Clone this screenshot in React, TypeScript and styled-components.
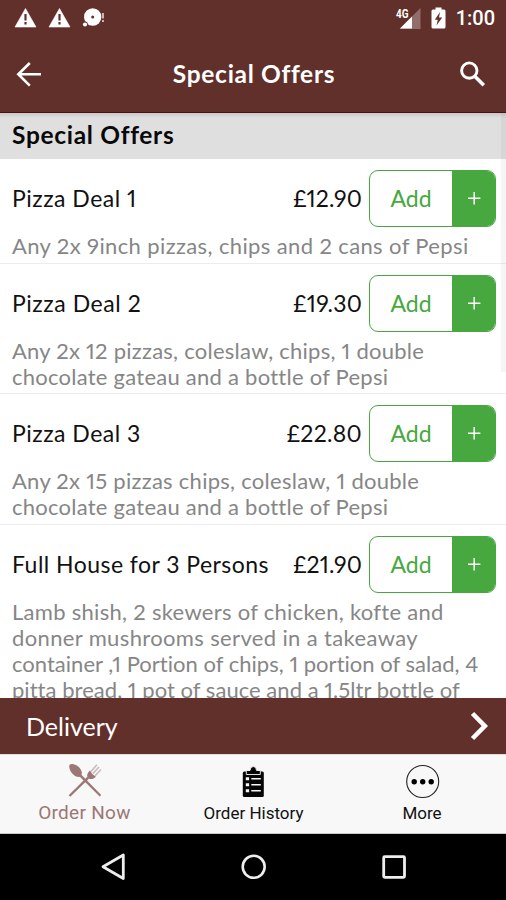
import React from "react";
import styled, { createGlobalStyle, css } from "styled-components";

const brand = "#62302b";
const green = "#46a83e";
const rosewood = "#9b7775";

const Global = createGlobalStyle`
  * { box-sizing: border-box; }
  body {
    margin: 0;
    font-family: "Lato", "Open Sans", sans-serif;
    font-variant-numeric: proportional-nums;
    font-variant-ligatures: none;
    background: #fff;
  }
`;

const Screen = styled.div`
  width: 506px;
  height: 900px;
  display: flex;
  flex-direction: column;
  overflow: hidden;
  background: #fff;
`;

const StatusBar = styled.div`
  flex: none;
  height: 36px;
  padding: 0 11px 0 13px;
  display: flex;
  justify-content: space-between;
  background: ${brand};
`;

const StatusGroup = styled.div<{ $gap: number }>`
  display: flex;
  gap: ${(p) => p.$gap}px;
`;

const Art = styled.svg`
  display: block;
  flex: none;
`;

const Clock = styled.span`
  font: 500 20px/37px "Roboto", sans-serif;
  color: #fff;
  margin-left: 2px;
`;

const Toolbar = styled.header`
  flex: none;
  height: 77px;
  padding: 0 19px 0 15px;
  display: grid;
  grid-template-columns: 28px 1fr 28px;
  align-items: center;
  background: ${brand};
  border-bottom: 1px solid #4d1210;
`;

const Title = styled.h1`
  margin: -1px 0 0 6px;
  text-align: center;
  font-size: 24.5px;
  font-weight: 700;
  letter-spacing: 0.7px;
  color: #fff;
`;

const List = styled.main`
  position: relative;
  flex: none;
  height: 585px;
  overflow: hidden;
`;

const ScrollThumb = styled.div`
  position: absolute;
  top: 0;
  right: 0;
  width: 5px;
  height: 259px;
  background: rgba(0, 0, 0, 0.04);
`;

const SectionTitle = styled.h2`
  margin: 0;
  height: 46px;
  padding: 0 12px;
  font-size: 24.5px;
  line-height: 44px;
  font-weight: 700;
  letter-spacing: 0.7px;
  background: linear-gradient(#c9c8ca, #dfdfdf 5px);
  color: #090909;
`;

const Item = styled.section<{ $height: number }>`
  height: ${(p) => p.$height}px;
  padding: 11px 10px 0 12px;
  border-bottom: 1px solid #ededed;
`;

const ItemRow = styled.div`
  display: flex;
  align-items: center;
  height: 57px;
`;

const textLine = css<{ $track: number }>`
  white-space: nowrap;
  letter-spacing: ${(p) => p.$track}px;
`;

const Name = styled.span<{ $track: number }>`
  ${textLine}
  flex: 1;
  font-size: 23px;
  line-height: 28px;
  padding-bottom: 2px;
  color: #111;
`;

const Price = styled.span<{ $track: number }>`
  ${textLine}
  font-size: 23px;
  line-height: 28px;
  padding-bottom: 2px;
  color: #111;
  margin-right: 7px;
`;

const AddButton = styled.button`
  display: flex;
  width: 127px;
  height: 57px;
  padding: 0;
  border: 1.5px solid ${green};
  border-radius: 9px;
  overflow: hidden;
  background: #fff;
  font: inherit;
`;

const AddLabel = styled.span`
  flex: 1;
  text-align: center;
  font-size: 23px;
  line-height: 54px;
  color: ${green};
`;

const AddPlus = styled.span`
  width: 43px;
  height: 100%;
  display: grid;
  place-items: center;
  background: ${green};
`;

const Description = styled.p`
  margin: 6px 0 0;
  font-size: 22px;
  line-height: 26px;
  color: #868686;
`;

const Line = styled.span<{ $track: number }>`
  ${textLine}
  display: block;
  width: max-content;
`;

const DeliveryBar = styled.div`
  flex: none;
  height: 56px;
  padding: 0 17px 0 26px;
  display: flex;
  align-items: center;
  justify-content: space-between;
  background: ${brand};
  color: #fff;
  font-size: 25px;
`;

const Tabs = styled.nav`
  flex: none;
  height: 80px;
  display: grid;
  grid-template-columns: 169px 169px 168px;
  background: #f8f8f8;
  border-top: 1px solid #e4dcdb;
  border-bottom: 1px solid #c8c8c8;
`;

const Tab = styled.div<{ $active?: boolean }>`
  display: flex;
  flex-direction: column;
  align-items: center;
  padding-top: 8px;
  font: 400 ${(p) => (p.$active ? 19 : 17)}px/24px "Roboto", sans-serif;
  color: ${(p) => (p.$active ? rosewood : "#111")};
`;

const TabLabel = styled.span<{ $track: number }>`
  ${textLine}
  margin-top: 2px;
`;

const SystemNav = styled.div`
  flex: 1;
  padding: 0 98px 0 99px;
  display: flex;
  align-items: center;
  justify-content: space-between;
  background: #000;
`;

const WarningIcon = () => (
  <Art width="24" height="36" viewBox="0 0 24 36">
    <path d="M12.5 8.500L23 27H2z" fill="#fff" stroke="#fff" strokeWidth="0.6" strokeLinejoin="round" />
    <path d="M12.5 14v6.500M12.500 22v2.400" stroke={brand} strokeWidth="2.2" />
  </Art>
);

const DebugIcon = () => (
  <Art width="26" height="36" viewBox="0 0 26 36">
    <circle cx="11.7" cy="17" r="8.7" fill="#fff" />
    <circle cx="11.7" cy="17" r="1.5" fill={brand} />
    <circle cx="4" cy="24.5" r="2.9" fill={brand} />
    <circle cx="4" cy="24.5" r="2.1" fill="#fff" />
    <path d="M22 13v5.500M22 20v2" stroke="#d3c2c0" strokeWidth="1.8" />
  </Art>
);

const SignalIcon = () => (
  <Art width="28" height="36" viewBox="0 0 28 36" fill="#fff">
    <path d="M26.5 8v21h-21z" opacity="0.3" />
    <path d="M18 16.500v12H6z" />
    <text x="2" y="17.5" fontFamily="Roboto, sans-serif" fontSize="12" fontWeight="700" textLength="12.500" lengthAdjust="spacingAndGlyphs">4G</text>
  </Art>
);

const BatteryIcon = () => (
  <Art width="16" height="36" viewBox="0 0 16 36">
    <path d="M5.500 7.500h6v2H14q1.500 0 1.500 1.500v16q0 1.500-1.500 1.500H3Q1.500 28.500 1.500 27V11q0-1.500 1.500-1.500h2.500z" fill="#fff" />
    <path d="M10 12L4.800 19.800h3L6.500 25.500l5.700-8H9z" fill={brand} />
  </Art>
);

const BackIcon = () => (
  <Art width="28" height="28" viewBox="0 0 28 28" fill="none" stroke="#fff" strokeWidth="2.6">
    <path d="M26 14.300H3.500M14.800 3L3.300 14.300l11.500 11.300" />
  </Art>
);

const SearchIcon = () => (
  <Art width="28" height="28" viewBox="0 0 28 28" fill="none" stroke="#fff">
    <circle cx="10.300" cy="10.600" r="7.700" strokeWidth="2.900" />
    <path d="M16 16.500l8.800 8.800" strokeWidth="3.600" />
  </Art>
);

const PlusIcon = () => (
  <Art width="14" height="14" viewBox="0 0 14 14" stroke="#fff" strokeWidth="1.500">
    <path d="M7.200 0v12.500M1 6.200h12.400" />
  </Art>
);

const ChevronIcon = () => (
  <Art width="20" height="30" viewBox="0 0 20 30" fill="none" stroke="#fff" strokeWidth="4.600">
    <path d="M3.500 2.500L15.800 15 3.500 27.500" />
  </Art>
);

const CutleryIcon = () => (
  <Art width="36" height="36" viewBox="0 0 36 36" fill={rosewood}>
    <path d="M2.200 3.500C2 1.500 4 .7 6.500 1.200c4 .8 7.300 4 8.200 7.500.3 1.300.1 2.300-.3 3.100L34.200 32l-1.500 1.600L12.800 13.800c-1.500.5-3.500.2-5.300-1.200C4.500 10.500 2.500 7.300 2.200 3.500z" />
    <path d="M1.700 32.200L20.300 13.700l1.800 1.800L3.300 33.800z" />
    <path d="M20.300 14c-.5-3 .6-4.500 2.600-6.500l2.500 3.800 3.500 2.400c-2.300 2.200-4.500 2.700-6.800 2z" />
    <path d="M23.700 8.800L30 1.800M25.800 10.600l6.200-6.600M28 12.800l6-6.300" stroke={rosewood} strokeWidth="1.700" opacity="0.450" />
  </Art>
);

const ClipboardIcon = () => (
  <Art width="36" height="36" viewBox="0.700 0 36 36">
    <path d="M9 8.500h18q1.500 0 1.500 1.500v22.500q0 1.500-1.500 1.500H9q-1.500 0-1.500-1.500V10Q7.500 8.500 9 8.500z" fill="#050505" />
    <path d="M11 11.500V7.500h3.700Q15 3.500 18 3.500t3.300 4H25v4z" fill="#050505" stroke="#f8f8f8" strokeWidth="0.900" />
    <g fill="#f8f8f8">
      <path d="M10.500 14.300h3.300v3h-3.300zM10.500 20.300h3.300v3h-3.300zM10.500 26.300h3.300v3h-3.300z" />
      <path d="M16 15h9.500v1.600H16zM16 21h9.500v1.600H16zM16 27h9.500v1.600H16z" />
    </g>
  </Art>
);

const MoreIcon = () => (
  <Art width="36" height="36" viewBox="-0.700 0 36 36">
    <circle cx="18" cy="18.500" r="16" fill="none" stroke="#222" strokeWidth="1.100" />
    <circle cx="9.500" cy="18.700" r="2.700" />
    <circle cx="18" cy="18.700" r="2.700" />
    <circle cx="26.500" cy="18.700" r="2.700" />
  </Art>
);

const NavBackIcon = () => (
  <Art width="28" height="28" viewBox="0 0 28 28" fill="none" stroke="#eee" strokeWidth="2.800" strokeLinejoin="round">
    <path d="M24.300 2v23.500L4 13.800z" />
  </Art>
);

const NavHomeIcon = () => (
  <Art width="28" height="28" viewBox="0 0 28 28" fill="none" stroke="#eee" strokeWidth="2.600">
    <circle cx="13.700" cy="13.800" r="11" />
  </Art>
);

const NavRecentsIcon = () => (
  <Art width="28" height="28" viewBox="0 0 28 28" fill="none" stroke="#eee" strokeWidth="2.800">
    <rect x="3.700" y="3.700" width="20.800" height="20.600" rx="1" />
  </Art>
);

interface Deal {
  name: string;
  nameTrack: number;
  price: string;
  priceTrack: number;
  height: number;
  lines: [string, number][];
}

const deals: Deal[] = [
  {
    name: "Pizza Deal 1",
    nameTrack: 0.5,
    price: "£12.90",
    priceTrack: 0.1,
    height: 105,
    lines: [["Any 2x 9inch pizzas, chips and 2 cans of Pepsi", 0.38]],
  },
  {
    name: "Pizza Deal 2",
    nameTrack: 0.55,
    price: "£19.30",
    priceTrack: 0.2,
    height: 130,
    lines: [
      ["Any 2x 12 pizzas, coleslaw, chips, 1 double", 0.25],
      ["chocolate gateau and a bottle of Pepsi", 0.25],
    ],
  },
  {
    name: "Pizza Deal 3",
    nameTrack: 0.5,
    price: "£22.80",
    priceTrack: 0.3,
    height: 131,
    lines: [
      ["Any 2x 15 pizzas chips, coleslaw, 1 double", 0.27],
      ["chocolate gateau and a bottle of Pepsi", 0.25],
    ],
  },
  {
    name: "Full House for 3 Persons",
    nameTrack: 0.46,
    price: "£21.90",
    priceTrack: 0.1,
    height: 210,
    lines: [
      ["Lamb shish, 2 skewers of chicken, kofte and", 0.29],
      ["donner mushrooms served in a takeaway", 0.36],
      ["container ,1 Portion of chips, 1 portion of salad, 4", 0.02],
      ["pitta bread, 1 pot of sauce and a 1.5ltr bottle of", 0.04],
    ],
  },
];

export default function App() {
  return (
    <Screen>
      <Global />
      <StatusBar>
        <StatusGroup $gap={10}>
          <WarningIcon />
          <WarningIcon />
          <DebugIcon />
        </StatusGroup>
        <StatusGroup $gap={8}>
          <SignalIcon />
          <BatteryIcon />
          <Clock>1:00</Clock>
        </StatusGroup>
      </StatusBar>
      <Toolbar>
        <BackIcon />
        <Title>Special Offers</Title>
        <SearchIcon />
      </Toolbar>
      <List>
        <SectionTitle>Special Offers</SectionTitle>
        {deals.map((deal) => (
          <Item key={deal.name} $height={deal.height}>
            <ItemRow>
              <Name $track={deal.nameTrack}>{deal.name}</Name>
              <Price $track={deal.priceTrack}>{deal.price}</Price>
              <AddButton>
                <AddLabel>Add</AddLabel>
                <AddPlus>
                  <PlusIcon />
                </AddPlus>
              </AddButton>
            </ItemRow>
            <Description>
              {deal.lines.map(([text, track]) => (
                <Line key={text} $track={track}>
                  {text}
                </Line>
              ))}
            </Description>
          </Item>
        ))}
        <ScrollThumb />
      </List>
      <DeliveryBar>
        <span>Delivery</span>
        <ChevronIcon />
      </DeliveryBar>
      <Tabs>
        <Tab $active>
          <CutleryIcon />
          <TabLabel $track={0.3}>Order Now</TabLabel>
        </Tab>
        <Tab>
          <ClipboardIcon />
          <TabLabel $track={0}>Order History</TabLabel>
        </Tab>
        <Tab>
          <MoreIcon />
          <TabLabel $track={0}>More</TabLabel>
        </Tab>
      </Tabs>
      <SystemNav>
        <NavBackIcon />
        <NavHomeIcon />
        <NavRecentsIcon />
      </SystemNav>
    </Screen>
  );
}
